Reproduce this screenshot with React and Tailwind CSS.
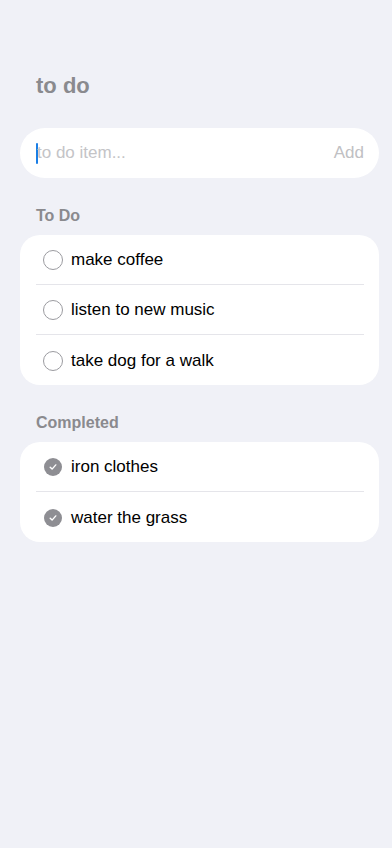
import React, { useState } from "react";

const todos = ["make coffee", "listen to new music", "take dog for a walk"];
const done = ["iron clothes", "water the grass"];

const Circle = () => (
  <span className="w-[20px] h-[20px] rounded-full border-[1.5px] border-[#9b9ba0] shrink-0" />
);

const Check = () => (
  <span className="w-[18px] h-[18px] rounded-full bg-[#8e8e93] shrink-0 flex items-center justify-center ml-[1px] mr-[1px]">
    <svg width="10" height="10" viewBox="0 0 10 10" fill="none">
      <path d="M2.2 5.2l1.9 1.9 3.7-4.2" stroke="white" strokeWidth="1.4" strokeLinecap="round" strokeLinejoin="round" />
    </svg>
  </span>
);

const Row = ({ text, checked, last }) => (
  <div className="pl-4 pr-[15px]">
    <div className={"h-[50px] flex items-center gap-[8px] pl-[7px] pt-[1px] " + (last ? "" : "border-b border-[#e5e5ea]")}>
      {checked ? <Check /> : <Circle />}
      <span className="text-[17px] text-black">{text}</span>
    </div>
  </div>
);

const App = () => {
  const [value, setValue] = useState("");
  return (
    <div className="min-h-[848px] bg-[#f0f1f7] pl-5 pr-[13px] pt-[72px]" style={{ fontFamily: '"Liberation Sans", Arial, sans-serif' }}>
      <h1 className="pl-4 text-[22px] font-bold text-[#8a8a8e] leading-[28px]">to do</h1>

      <div className="mt-[28px] h-[50px] bg-white rounded-[25px] flex items-center pl-4 pr-[15px]">
        <div className="flex-1 flex items-center">
          <span className="w-[2px] h-[21px] bg-[#1a7ee6] rounded" />
          <input
            value={value}
            onChange={(e) => setValue(e.target.value)}
            placeholder="to do item..."
            className="flex-1 -ml-[1px] text-[17px] text-black placeholder:text-[#c4c4c7] outline-none bg-transparent"
          />
        </div>
        <span className="text-[17px] text-[#c0c0c3]">Add</span>
      </div>

      <h2 className="mt-[28px] pl-4 text-[16px] font-semibold text-[#8a8a8e] leading-[20px]">To Do</h2>
      <div className="mt-[9px] bg-white rounded-[20px]">
        {todos.map((t, i) => (
          <Row key={t} text={t} last={i === todos.length - 1} />
        ))}
      </div>

      <h2 className="mt-[28px] pl-4 text-[16px] font-semibold text-[#8a8a8e] leading-[20px]">Completed</h2>
      <div className="mt-[9px] bg-white rounded-[20px]">
        {done.map((t, i) => (
          <Row key={t} text={t} checked last={i === done.length - 1} />
        ))}
      </div>
    </div>
  );
};

export default App;
